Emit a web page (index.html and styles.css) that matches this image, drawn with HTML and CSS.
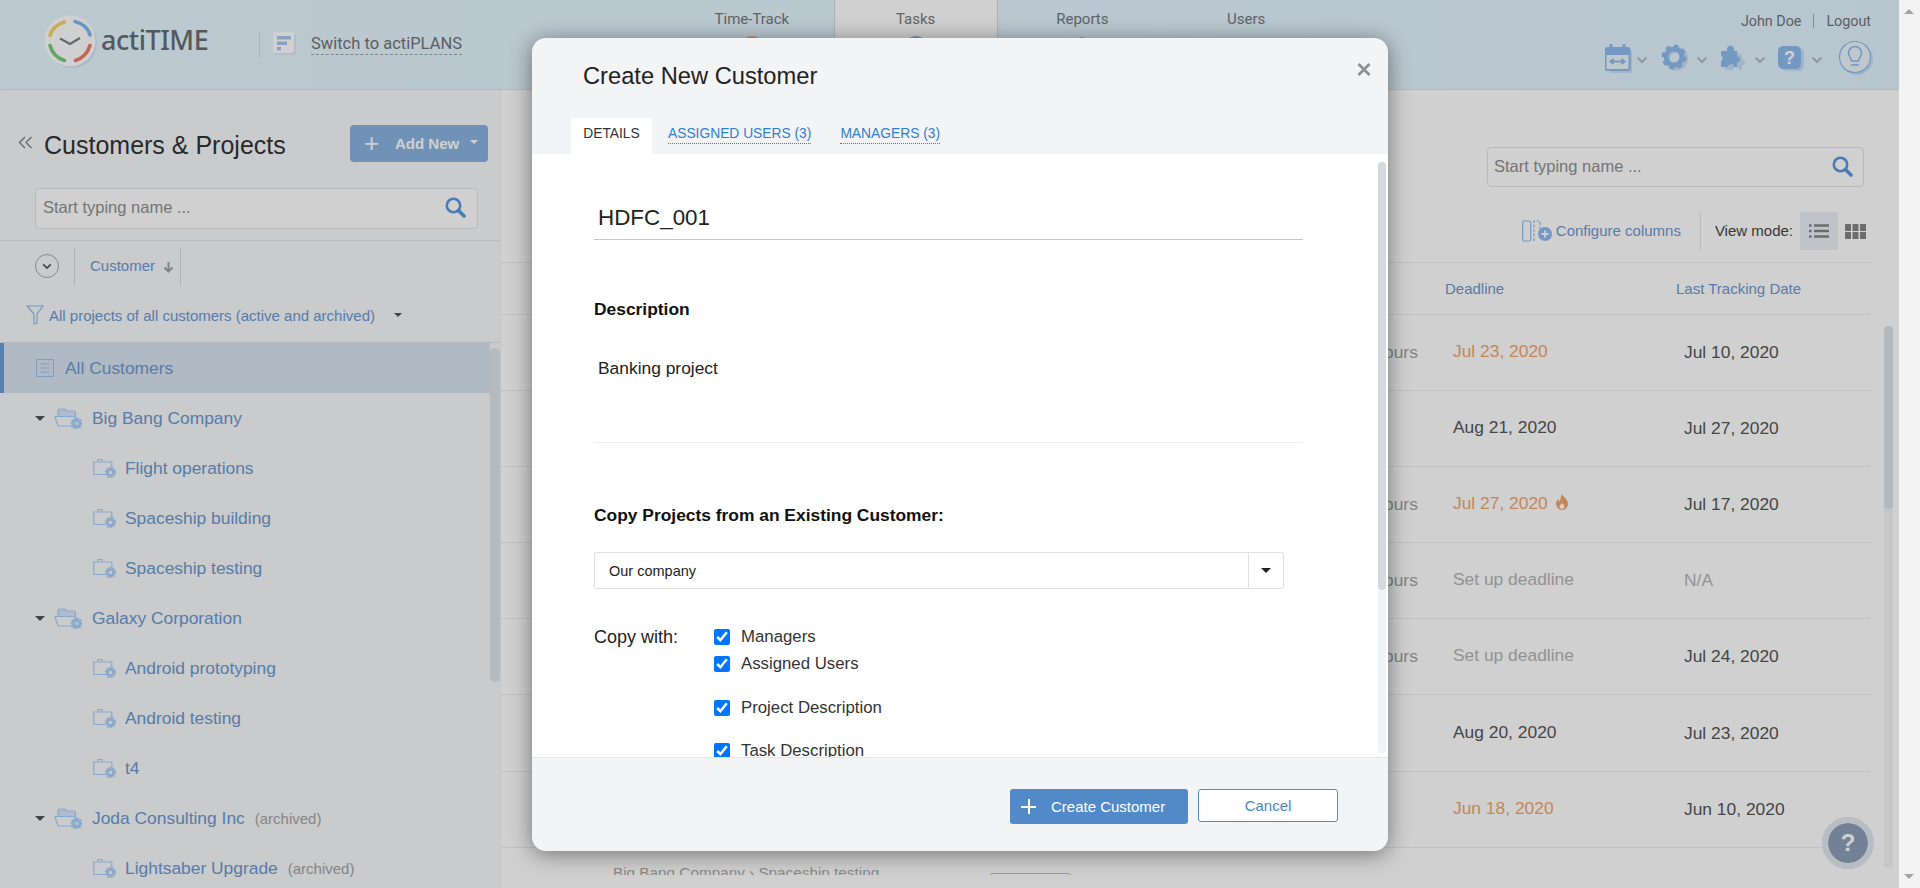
FILE: index.html
```html
<!DOCTYPE html>
<html lang="en">
<head>
<meta charset="utf-8">
<title>actiTIME - Create New Customer</title>
<link rel="stylesheet" href="styles.css">
</head>
<body>
<svg class="defs" width="0" height="0" aria-hidden="true">
  <defs>
    <symbol id="folder" viewBox="0 0 28 22">
      <path d="M4 10V3.500a1.500 1.500 0 0 1 1.500-1.500H11l2 2h7a1.500 1.500 0 0 1 1.500 1.500V9.500H4z" fill="currentColor" fill-opacity=".45" stroke="currentColor" stroke-width="1.200"/>
      <path d="M1 9.500h20l1 1V19H4z" fill="none" stroke="currentColor" stroke-width="1.200"/>
      <circle cx="22.500" cy="16.500" r="4.800" fill="none" stroke="currentColor" stroke-width="2.400" stroke-dasharray="1.800 1"/>
      <circle cx="22.500" cy="16.500" r="3.300" fill="none" stroke="currentColor" stroke-width="2.400"/>
    </symbol>
    <symbol id="project" viewBox="0 0 23 20">
      <path d="M.8 16.500V4h18v6M.8 16.500h12M5 4V1.500h4V4" fill="none" stroke="currentColor" stroke-width="1.200"/>
      <circle cx="17.500" cy="14.500" r="4.500" fill="none" stroke="currentColor" stroke-width="2.400" stroke-dasharray="1.800 1"/>
      <circle cx="17.500" cy="14.500" r="3" fill="none" stroke="currentColor" stroke-width="2.400"/>
    </symbol>
    <symbol id="search" viewBox="0 0 21 21">
      <circle cx="8.500" cy="8.500" r="6.700" fill="none" stroke="currentColor" stroke-width="2.600"/>
      <path d="M13.500 13.500l5.500 5.500" stroke="currentColor" stroke-width="3.600" stroke-linecap="round"/>
    </symbol>
    <symbol id="chev" viewBox="0 0 12 8">
      <path d="M1.500 1.500L6 6l4.500-4.500" fill="none" stroke="currentColor" stroke-width="2"/>
    </symbol>
  </defs>
</svg>

<div class="window">
  <div class="page">
    <header class="topbar">
      <div class="brand">
        <svg class="logo" viewBox="0 0 54 54" width="54" height="54">
          <circle cx="28" cy="28" r="25" fill="#cfe3f5"/>
          <circle cx="26" cy="26" r="25.500" fill="#fff"/>
          <path d="M6 20.500C8 14 13 9 20.500 7" fill="none" stroke="#f6d56c" stroke-width="3.600" stroke-linecap="round"/>
          <path d="M31 6.500C38 8 44 13 46 20" fill="none" stroke="#82b9ee" stroke-width="3.600" stroke-linecap="round"/>
          <path d="M46 30.500C44 37 39 43 31.500 45.500" fill="none" stroke="#ec7f6e" stroke-width="3.600" stroke-linecap="round"/>
          <path d="M6 30.500C8 38 13 43 20.500 45.500" fill="none" stroke="#78cc7c" stroke-width="3.600" stroke-linecap="round"/>
          <path d="M16 23.500l10 5.500 10-6" fill="none" stroke="#7c8186" stroke-width="2.200"/>
        </svg>
        <span class="wordmark">actiTIME</span>
      </div>
      <div class="switch">
        <svg class="switch-icon" viewBox="0 0 23 23" width="23" height="23">
          <rect x="2" y="2" width="21" height="21" rx="3" fill="#dbe8f3"/>
          <rect width="21" height="21" rx="3" fill="#fff"/>
          <path d="M4 4h14v3.500H4zM4 9.500h10V13H4zM4 15h4v3.500H4z" fill="#a6c8ec"/>
        </svg>
        <span class="switch-link">Switch to actiPLANS</span>
      </div>
      <nav class="nav">
        <div class="nav-item">Time-Track<i class="nav-dot dot-orange"></i></div>
        <div class="nav-item nav-active">Tasks<i class="nav-dot dot-blue"></i></div>
        <div class="nav-item nav-reports">Reports<i class="nav-dot dot-grey"></i></div>
        <div class="nav-item">Users</div>
      </nav>
      <div class="account">
        <div class="user"><span>John Doe</span><i class="user-sep"></i><span>Logout</span></div>
        <div class="tools">
          <svg class="tool-cal" viewBox="0 0 28 29" width="28" height="29">
            <path d="M5 6h20a2 2 0 0 1 2 2v19a2 2 0 0 1-2 2H5z" fill="#c6ddf6"/>
            <path d="M2.500 4h20a2 2 0 0 1 2 2v18a2 2 0 0 1-2 2h-20a2 2 0 0 1-2-2V6a2 2 0 0 1 2-2z" fill="#edf5fb" stroke="#8ebcf0" stroke-width="2"/>
            <path d="M1 4h23v7H1z" fill="#8ebcf0"/>
            <path d="M6 1v5M19 1v5" stroke="#8ebcf0" stroke-width="3" stroke-linecap="round"/>
            <path d="M6 17.500h13M8.500 15l-3 2.500 3 2.500M16.500 15l3 2.500-3 2.500" fill="none" stroke="#8ebcf0" stroke-width="2"/>
          </svg>
          <svg class="tool-chev chev-a"><use href="#chev"/></svg>
          <svg class="tool-gear" viewBox="0 0 29 28" width="29" height="28">
            <circle cx="15" cy="14.500" r="9" fill="none" stroke="#c6ddf6" stroke-width="6"/>
            <circle cx="13" cy="13" r="8" fill="none" stroke="#8ebcf0" stroke-width="5"/>
            <circle cx="13" cy="13" r="10.500" fill="none" stroke="#8ebcf0" stroke-width="4" stroke-dasharray="4.200 4"/>
          </svg>
          <svg class="tool-chev chev-b"><use href="#chev"/></svg>
          <svg class="tool-puzzle" viewBox="0 0 28 29" width="28" height="29">
            <path d="M2 8h6.500a3.500 3.500 0 1 1 7 0H19v5.500a3 3 0 1 1 0 6V24h-3a3 3 0 1 0-6 0H2v-5.500a3.500 3.500 0 0 0 0-6z" fill="#c6ddf6" transform="translate(3 2)"/>
            <path d="M1 7h6.500a3.500 3.500 0 1 1 6 0H17v5.500a3 3 0 1 1 0 6V23h-3a3 3 0 1 0-6 0H1v-5.500a3.500 3.500 0 0 0 0-6z" fill="#8ebcf0"/>
          </svg>
          <svg class="tool-chev chev-c"><use href="#chev"/></svg>
          <svg class="tool-help" viewBox="0 0 28 27" width="28" height="27">
            <rect x="4" y="3" width="23" height="23" rx="5" fill="#c6ddf6"/>
            <rect x="1" y="1" width="23" height="23" rx="5" fill="#8ebcf0"/>
            <text class="tool-q" x="12.500" y="18.500" text-anchor="middle">?</text>
          </svg>
          <svg class="tool-chev chev-d"><use href="#chev"/></svg>
          <svg class="tool-bulb" viewBox="0 0 36 36" width="36" height="36">
            <circle cx="19" cy="19" r="16" fill="#c6ddf6"/>
            <circle cx="17" cy="17" r="15.500" fill="#ecf6fd" stroke="#8ebcf0" stroke-width="1.200"/>
            <path d="M13.500 21c0-3-3-4-3-8a6.500 6.500 0 0 1 13 0c0 4-3 5-3 8z" fill="none" stroke="#8ebcf0" stroke-width="1.600"/>
            <path d="M13 25h8" stroke="#8ebcf0" stroke-width="1.600"/>
          </svg>
        </div>
      </div>
    </header>

    <div class="content">
      <aside class="sidebar">
        <div class="side-head">
          <svg class="collapse" viewBox="0 0 15 13" width="15" height="13"><path d="M7 1L1.500 6.500 7 12M13.500 1L8 6.500l5.500 5.500" fill="none" stroke="#8a8a8a" stroke-width="1.500"/></svg>
          <h1 class="side-title">Customers &amp; Projects</h1>
          <button class="add-new"><span class="add-plus">+</span><span>Add New</span><i class="add-caret"></i></button>
        </div>
        <div class="side-search">
          <span class="placeholder">Start typing name ...</span>
          <svg class="search-icon"><use href="#search"/></svg>
        </div>
        <div class="sort-row">
          <span class="expand"><svg class="expand-chev"><use href="#chev"/></svg></span>
          <span class="sort-cell">Customer <svg class="sort-arrow" viewBox="0 0 11 12" width="11" height="12"><path d="M5.500 1v9M1.500 6.500l4 4 4-4" fill="none" stroke="#a0a3a6" stroke-width="2"/></svg></span>
        </div>
        <div class="filter-row">
          <svg class="funnel" viewBox="0 0 18 20" width="18" height="20"><path d="M1 1h16l-6 8v9l-3 1V9z" fill="none" stroke="#8ebcf0" stroke-width="1.200"/></svg>
          <span>All projects of all customers (active and archived)</span>
          <i class="filter-caret"></i>
        </div>
        <div class="tree">
          <div class="tree-list">
            <div class="tree-row tree-all">
              <svg class="all-icon" viewBox="0 0 20 20" width="20" height="20"><path d="M1.500 1.500h17v17h-17zM5.500 6h9M5.500 10h9M5.500 14h9" fill="none" stroke="#9cc2ee" stroke-width="1"/></svg>
              All Customers
            </div>
            <div class="tree-row tree-cust"><i class="tree-caret"></i><svg class="icon-folder"><use href="#folder"/></svg>Big Bang Company</div>
            <div class="tree-row tree-proj"><svg class="icon-project"><use href="#project"/></svg>Flight operations</div>
            <div class="tree-row tree-proj"><svg class="icon-project"><use href="#project"/></svg>Spaceship building</div>
            <div class="tree-row tree-proj"><svg class="icon-project"><use href="#project"/></svg>Spaceship testing</div>
            <div class="tree-row tree-cust"><i class="tree-caret"></i><svg class="icon-folder"><use href="#folder"/></svg>Galaxy Corporation</div>
            <div class="tree-row tree-proj"><svg class="icon-project"><use href="#project"/></svg>Android prototyping</div>
            <div class="tree-row tree-proj"><svg class="icon-project"><use href="#project"/></svg>Android testing</div>
            <div class="tree-row tree-proj"><svg class="icon-project"><use href="#project"/></svg>t4</div>
            <div class="tree-row tree-cust"><i class="tree-caret"></i><svg class="icon-folder"><use href="#folder"/></svg>Joda Consulting Inc <span class="archived">(archived)</span></div>
            <div class="tree-row tree-proj"><svg class="icon-project"><use href="#project"/></svg>Lightsaber Upgrade <span class="archived">(archived)</span></div>
          </div>
          <div class="tree-scroll"><div class="tree-thumb"></div></div>
        </div>
      </aside>

      <main class="main">
        <div class="main-search-wrap">
          <div class="main-search">
            <span class="placeholder">Start typing name ...</span>
            <svg class="search-icon"><use href="#search"/></svg>
          </div>
        </div>
        <div class="toolbar">
          <svg class="config-icon" viewBox="0 0 31 22" width="31" height="22">
            <rect x=".7" y="1" width="8" height="20" rx="1.500" fill="none" stroke="#8ebcf0" stroke-width="1.200"/>
            <path d="M12 21V1h6v9" fill="none" stroke="#8ebcf0" stroke-width="1.200" stroke-dasharray="3 1.500"/>
            <circle cx="23" cy="14" r="7" fill="#8ebcf0"/>
            <path d="M19.500 14h7M23 10.500v7" stroke="#fff" stroke-width="1.800"/>
          </svg>
          <span class="config-link">Configure columns</span>
          <i class="toolbar-sep"></i>
          <span class="view-label">View mode:</span>
          <span class="view-active">
            <svg viewBox="0 0 20 14" width="20" height="14"><path d="M0 1.500h2.500M5 1.500h15M0 7h2.500M5 7h15M0 12.500h2.500M5 12.500h15" stroke="#858585" stroke-width="2.400"/></svg>
          </span>
          <svg class="view-grid" viewBox="0 0 21 15" width="21" height="15"><path d="M0 0h6v7H0zM7.500 0h6v7h-6zM15 0h6v7h-6zM0 8h6v7H0zM7.500 8h6v7h-6zM15 8h6v7h-6z" fill="#858585"/></svg>
        </div>
        <div class="table-wrap">
          <div class="table">
            <div class="thead">
              <span class="c-dead">Deadline</span><span class="c-last">Last Tracking Date</span>
            </div>
            <div class="trow"><span class="c-time">ours</span><span class="c-dead orange">Jul 23, 2020</span><span class="c-last">Jul 10, 2020</span></div>
            <div class="trow"><span class="c-time"></span><span class="c-dead">Aug 21, 2020</span><span class="c-last">Jul 27, 2020</span></div>
            <div class="trow"><span class="c-time">ours</span><span class="c-dead orange">Jul 27, 2020 <svg class="flame" viewBox="0 0 14 16" width="14" height="16"><path d="M7 0c1 3 6 5 6 10a6 6 0 0 1-12 0c0-2 1-4 2.500-5 0 2 1 2.500 1.500 2.500C5.500 5 6 2 7 0z" fill="#f2a56b"/><path d="M7 9c1 1 2.500 2 2.500 3.500a2.500 2.500 0 0 1-5 0C4.500 11 6 10.500 7 9z" fill="#fff"/></svg></span><span class="c-last">Jul 17, 2020</span></div>
            <div class="trow"><span class="c-time">ours</span><span class="c-dead muted">Set up deadline</span><span class="c-last muted">N/A</span></div>
            <div class="trow"><span class="c-time">ours</span><span class="c-dead muted">Set up deadline</span><span class="c-last">Jul 24, 2020</span></div>
            <div class="trow"><span class="c-time"></span><span class="c-dead">Aug 20, 2020</span><span class="c-last">Jul 23, 2020</span></div>
            <div class="trow"><span class="c-time"></span><span class="c-dead orange">Jun 18, 2020</span><span class="c-last">Jun 10, 2020</span></div>
            <div class="clip-row"><span class="crumb">Big Bang Company › Spaceship testing</span><span class="status-pill"></span></div>
          </div>
          <div class="main-scroll"><div class="main-thumb"></div></div>
        </div>
        <div class="help-fab">?</div>
      </main>
    </div>
    <div class="scrim"></div>
  </div>
  <div class="page-scroll"><i class="arrow-up"></i><i class="arrow-down"></i></div>
</div>

<section class="modal">
  <header class="modal-head">
    <h2 class="modal-title">Create New Customer</h2>
    <svg class="modal-close" viewBox="0 0 14 13" width="14" height="13"><path d="M1.500 1l11 11M12.500 1l-11 11" stroke="#8c8f93" stroke-width="2.800"/></svg>
    <div class="tabs">
      <span class="tab tab-on">DETAILS</span>
      <span class="tab-link tab-a">ASSIGNED USERS (3)</span>
      <span class="tab-link">MANAGERS (3)</span>
    </div>
  </header>
  <div class="modal-body">
    <div class="form">
      <div class="name-field">HDFC_001</div>
      <div class="label desc-label">Description</div>
      <div class="desc-text">Banking project</div>
      <hr class="divider">
      <div class="label copy-label">Copy Projects from an Existing Customer:</div>
      <div class="select"><span class="select-value">Our company</span><span class="select-btn"><i class="select-caret"></i></span></div>
      <div class="copy-with">
        <span class="copy-title">Copy with:</span>
        <div class="checks">
          <label class="check c1"><input type="checkbox" checked>Managers</label>
          <label class="check c2"><input type="checkbox" checked>Assigned Users</label>
          <label class="check c3"><input type="checkbox" checked>Project Description</label>
          <label class="check c4"><input type="checkbox" checked>Task Description</label>
        </div>
      </div>
    </div>
    <div class="modal-scroll"><div class="modal-thumb"></div></div>
  </div>
  <footer class="modal-foot">
    <button class="btn-create"><span class="btn-plus"></span>Create Customer</button>
    <button class="btn-cancel">Cancel</button>
  </footer>
</section>
</body>
</html>
```
FILE: styles.css
```css
* { box-sizing: border-box; }
html, body { margin: 0; height: 888px; overflow: hidden; }
body { font-family: "Liberation Sans", Arial, sans-serif; color: #333; background: #fff; position: relative; }
.defs { position: absolute; }
i { display: block; font-style: normal; }
button { font-family: inherit; cursor: pointer; }

.window { display: flex; height: 888px; }
.page { position: relative; flex: 1; min-width: 0; display: flex; flex-direction: column; background: #fff; }
.scrim { position: absolute; inset: 0; background: rgba(0, 0, 0, .185); }

.page-scroll { position: relative; width: 21px; background: #f3f3f3; }
.arrow-up, .arrow-down { position: absolute; left: 5px; width: 0; height: 0; border-left: 5px solid transparent; border-right: 5px solid transparent; }
.arrow-up { top: 9px; border-bottom: 5px solid #a3a3a3; }
.arrow-down { bottom: 9px; border-top: 5px solid #a3a3a3; }

/* top bar */
.topbar { height: 90px; flex: none; display: flex; background: linear-gradient(90deg, #e7f7ff, #e2f3ff); border-bottom: 1px solid #d6e3ee; font-family: Roboto, sans-serif; }
.brand { width: 259px; padding: 15px 0 0 44px; display: flex; align-items: flex-start; flex: none; position: relative; }
.brand::after { content: ""; position: absolute; left: 259px; top: 32px; height: 25px; width: 1px; background: #cfdde8; }
.logo { flex: none; margin-right: 3px; }
.wordmark { font-family: "Noto Sans", sans-serif; font-size: 27px; font-weight: 500; line-height: 50px; color: #676e74; letter-spacing: -.45px; }
.switch { width: 411px; flex: none; padding: 32px 0 0 14px; display: flex; align-items: flex-start; }
.switch-icon { flex: none; margin-right: 15px; }
.switch-link { font-size: 16.500px; line-height: 20px; margin-top: 2px; color: #707478; border-bottom: 1px dashed #9aa3ab; }
.nav { display: flex; width: 658px; flex: none; }
.nav-item { width: 164px; position: relative; height: 89px; text-align: center; padding-top: 9px; font-size: 15px; line-height: 20px; color: #75797d; }
.nav-active { background: #fff; border-left: 1px solid #cfdde8; border-right: 1px solid #cfdde8; }
.nav-reports { margin-left: 3px; }
.nav-dot { position: absolute; left: 50%; top: 36px; margin-left: -11px; width: 22px; height: 22px; border-radius: 50%; }
.dot-orange { background: #f3b07f; }
.dot-blue { background: #82bfe6; }
.dot-grey { background: #a9bed5; top: 37px; width: 8px; height: 8px; margin-left: -4px; }
.account { flex: 1; position: relative; }
.user { position: absolute; right: 28px; top: 12px; display: flex; align-items: center; font-size: 14.300px; line-height: 18px; color: #707478; }
.user-sep { width: 1px; height: 14px; background: #a2abb2; margin: 0 12px; }
.tools { position: absolute; right: 25px; top: 40px; display: flex; align-items: center; }
.tool-chev { width: 12px; height: 8px; color: #b4bac0; margin-top: 3px; flex: none; }
.chev-a { margin-left: 3px; margin-right: 13px; }
.chev-b { margin-left: 6px; margin-right: 12px; }
.chev-c { margin-left: 6px; margin-right: 11px; }
.chev-d { margin-left: 6px; margin-right: 0; }
.tool-q { font-family: "Liberation Sans", sans-serif; font-size: 18px; font-weight: 700; fill: #fff; }
.tool-bulb { margin-left: 15px; }

/* content area */
.content { flex: 1; min-height: 0; display: flex; }
.sidebar { width: 501px; flex: none; background: #f7f9fb; border-right: 1px solid #f2f2f2; display: flex; flex-direction: column; overflow: hidden; }
.side-head { height: 97px; flex: none; padding: 35px 12px 0 18px; display: flex; align-items: flex-start; }
.collapse { flex: none; margin: 11px 11px 0 0; }
.side-title { margin: 2px 0 0; flex: 1; font-size: 25px; font-weight: 400; line-height: 36px; color: #333; white-space: nowrap; }
.add-new { width: 138px; height: 37px; border: 0; border-radius: 4px; background: #88b3e0; color: #fff; display: flex; align-items: center; font-size: 15px; font-weight: 700; padding: 0 0 0 14px; }
.add-plus { font-size: 26px; font-weight: 400; width: 31px; text-align: left; line-height: 26px; margin-top: -2px; }
.add-caret { margin: 0 0 4px 11px; border-left: 4px solid transparent; border-right: 4px solid transparent; border-top: 4px solid #fff; width: 0; }
.side-search { flex: none; margin: 1px 22px 0 35px; height: 41px; border: 1px solid #e3e3e3; border-radius: 4px; background: #fff; display: flex; align-items: center; justify-content: space-between; padding: 0 11px 2px 7px; }
.placeholder { font-size: 16.500px; color: #8f8f8f; }
.search-icon { width: 21px; height: 21px; color: #5e97d8; flex: none; }
.sort-row { flex: none; margin-top: 11px; border-top: 1px solid #e3e6ea; height: 58px; padding: 7px 0 0 35px; display: flex; align-items: flex-start; }
.expand { width: 24px; height: 24px; margin-top: 6px; border-radius: 50%; border: 1px solid #a7a7a7; display: flex; align-items: center; justify-content: center; flex: none; }
.expand-chev { width: 10px; height: 7px; color: #555; }
.sort-cell { margin-left: 15px; height: 38px; border-left: 1px solid #dcdcdc; border-right: 1px solid #dcdcdc; padding: 9px 6px 0 15px; font-size: 15px; color: #6b98d0; display: flex; align-items: flex-start; gap: 8px; line-height: 18px; }
.sort-arrow { margin-top: 4px; }
.filter-row { flex: none; height: 44px; padding: 6px 0 0 26px; display: flex; align-items: flex-start; font-size: 15px; line-height: 18px; color: #6b98d0; white-space: nowrap; }
.funnel { margin: 1px 5px 0 0; flex: none; }
.filter-row > span { margin-top: 3px; }
.filter-caret { margin: 9px 0 0 19px; border-left: 4px solid transparent; border-right: 4px solid transparent; border-top: 4px solid #555; width: 0; }
.tree { flex: 1; min-height: 0; position: relative; border-top: 1px solid #dfe3e7; }
.tree-list { overflow: hidden; height: 100%; }
.tree-row { height: 50px; display: flex; align-items: center; font-size: 17.400px; color: #6b98d0; white-space: nowrap; }
.tree-all { background: #d8e4f2; border-left: 4px solid #6b9edb; padding-left: 31px; margin-right: 10px; }
.all-icon { margin-right: 10px; flex: none; }
.tree-cust { padding-left: 35px; }
.tree-caret { width: 0; border-left: 5px solid transparent; border-right: 5px solid transparent; border-top: 5px solid #555; margin-right: 9px; }
.icon-folder { width: 28px; height: 22px; color: #a9cffa; margin-right: 10px; flex: none; }
.tree-proj { padding-left: 93px; }
.icon-project { width: 23px; height: 20px; color: #a9cffa; margin-right: 9px; flex: none; }
.archived { font-size: 15px; color: #a4a4a4; margin-left: 10px; }
.tree-scroll { position: absolute; right: 0; top: 0; bottom: 0; width: 10px; background: #f7f9fb; }
.tree-thumb { margin-top: 5px; height: 334px; border-radius: 5px; background: #dfe4e8; }

/* main */
.main { flex: 1; min-width: 0; background: #fff; position: relative; display: flex; flex-direction: column; overflow: hidden; }
.main-search-wrap { flex: none; height: 97px; padding: 57px 35px 0 0; display: flex; justify-content: flex-end; }
.main-search { width: 377px; height: 40px; border: 1px solid #e3e3e3; border-radius: 4px; display: flex; align-items: center; justify-content: space-between; padding: 0 10px 2px 6px; }
.toolbar { flex: none; height: 75px; padding: 25px 33px 0 0; display: flex; justify-content: flex-end; align-items: flex-start; font-size: 15px; line-height: 38px; }
.config-icon { margin: 8px 3px 0 0; }
.config-link { color: #6b98d0; }
.toolbar-sep { width: 1px; height: 38px; background: #e6e6e6; margin: 0 14px 0 19px; }
.view-label { color: #444; margin-right: 7px; }
.view-active { width: 38px; height: 38px; background: #eceff5; display: flex; align-items: center; justify-content: center; }
.view-grid { margin: 12px 0 0 7px; }
.table-wrap { flex: 1; min-height: 0; position: relative; overflow: hidden; }
.table { margin-right: 29px; font-size: 17.400px; border-top: 1px solid #ededed; height: 613px; overflow: hidden; }
.thead { height: 50.500px; display: flex; font-size: 15px; padding: 17px 0 0 0; position: relative; }
.thead .c-dead { margin-left: 944px; width: 231px; }
.trow { height: 76.200px; border-top: 1px solid #ededed; display: flex; align-items: center; position: relative; }
.c-time { margin-left: 883px; width: 69px; color: #a0a0a0; }
.trow .c-dead { width: 231px; margin-top: -2px; }
.c-dead, .c-last { color: #555; white-space: nowrap; }
.thead .c-last, .thead .c-dead { color: #6b98d0; }
.trow .orange { color: #f2a56b; }
.trow .muted { color: #b4b4b4; }
.flame { margin-left: 2px; vertical-align: -1px; }
.clip-row { border-top: 1px solid #ededed; height: 30px; display: flex; padding: 17px 0 0 112px; font-size: 15.300px; color: #a8a8a8; position: relative; }
.crumb { width: 376px; white-space: nowrap; line-height: 16px; }
.status-pill { width: 83px; height: 12px; border: 1px solid #e5b94e; border-radius: 4px 4px 0 0; background: #fff; margin-top: 8px; }
.main-scroll { position: absolute; right: 6px; top: 64px; width: 9px; bottom: 20px; border-radius: 4px; background: #f4f4f4; }
.main-thumb { height: 183px; border-radius: 4px; background: #dfe3e6; }
.help-fab { position: absolute; right: 25px; bottom: 19px; width: 52px; height: 52px; border-radius: 50%; border: 6px solid #e2e7f0; background: #8c9fb8; background-clip: padding-box; color: #fff; font-size: 24px; font-weight: 700; text-align: center; line-height: 40px; }

/* modal */
.modal { position: absolute; left: 532px; top: 38px; width: 856px; height: 813px; border-radius: 14px; background: #f3f4f6; box-shadow: 0 3px 22px rgba(0, 0, 0, .45); display: flex; flex-direction: column; overflow: hidden; }
.modal-head { height: 116px; flex: none; position: relative; }
.modal-title { margin: 0; position: absolute; left: 51px; top: 23px; font-size: 23.700px; line-height: 30px; font-weight: 400; color: #222; }
.modal-close { position: absolute; right: 17px; top: 25px; }
.tabs { position: absolute; left: 39px; bottom: 0; display: flex; align-items: flex-start; font-size: 13.800px; line-height: 18px; }
.tab { height: 36px; width: 81px; background: #fff; text-align: center; padding-top: 7px; color: #333; }
.tab-link { margin: 7px 0 0 16px; color: #2f80cf; border-bottom: 1px dotted #2f80cf; }
.tab-a { margin-right: 13px; }
.modal-body { flex: 1; min-height: 0; background: #fff; position: relative; overflow: hidden; border-bottom: 1px solid #e6e6e6; }
.form { padding: 0 0 0 62px; width: 771px; font-size: 17.400px; color: #222; }
.name-field { margin-top: 47px; height: 39px; padding: 0 0 0 4px; font-size: 22.400px; line-height: 33px; color: #222; border-bottom: 1px solid #c8c8c8; }
.label { font-weight: 700; color: #111; }
.desc-label { margin-top: 59px; line-height: 20px; }
.desc-text { margin: 39px 0 0 4px; line-height: 20px; }
.divider { margin: 64px 0 0; border: 0; border-top: 1px solid #ececec; }
.copy-label { margin-top: 62px; line-height: 20px; }
.select { margin-top: 27px; width: 690px; height: 37px; border: 1px solid #e1e1e1; border-radius: 2px; display: flex; align-items: center; font-size: 14.500px; }
.select-value { flex: 1; padding-left: 14px; }
.select-btn { width: 35px; height: 100%; border-left: 1px solid #e1e1e1; display: flex; align-items: center; justify-content: center; }
.select-caret { width: 0; border-left: 5px solid transparent; border-right: 5px solid transparent; border-top: 5px solid #222; }
.copy-with { margin-top: 38px; display: flex; align-items: flex-start; }
.copy-title { width: 120px; line-height: 20px; font-size: 18px; }
.checks { display: flex; flex-direction: column; font-size: 16.800px; }
.check { display: flex; align-items: center; height: 20px; color: #333; }
.check input { width: 16px; height: 16px; margin: 0 11px 0 0; accent-color: #0075ff; }
.c2 { margin-top: 7px; }
.c3 { margin-top: 24px; }
.c4 { margin-top: 23px; }
.modal-scroll { position: absolute; right: 2px; top: 8px; bottom: 4px; width: 8px; border-radius: 4px; background: #f2f3f5; }
.modal-thumb { height: 428px; border-radius: 4px; background: #d4dadf; }
.modal-foot { height: 93px; flex: none; display: flex; align-items: flex-start; justify-content: flex-end; padding: 31px 50px 0 0; gap: 10px; }
.btn-create { height: 35px; width: 178px; border: 0; border-radius: 3px; background: #5189c9; color: #fff; font-size: 15px; display: flex; align-items: center; padding: 0 0 0 41px; position: relative; }
.btn-plus { position: absolute; left: 11px; top: 10px; width: 15px; height: 15px; background: linear-gradient(#fff, #fff) center/2px 15px no-repeat, linear-gradient(#fff, #fff) center/15px 2px no-repeat; }
.btn-cancel { height: 33px; width: 140px; border: 1px solid #5189c9; border-radius: 3px; background: #fff; color: #4a86c8; font-size: 15px; }
```
